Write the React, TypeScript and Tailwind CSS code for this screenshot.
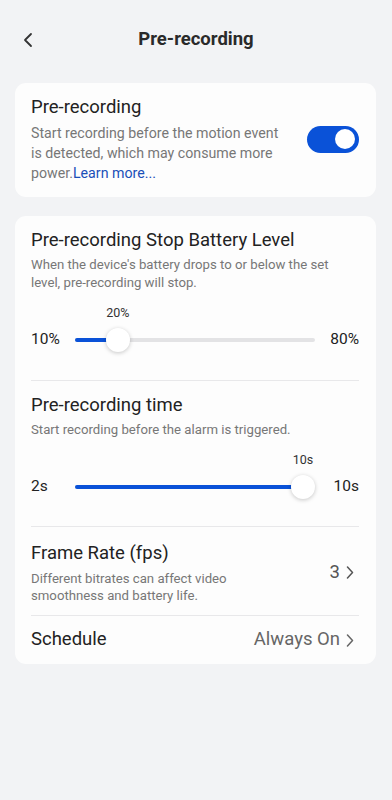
import { ChevronLeft } from 'lucide-react'

// ─── Bits ─────────────────────────────────────────────────────────────────────

function Chevron() {
  return (
    <svg width="8" height="13" viewBox="0 0 8 13" fill="none" className="ml-[6px]">
      <path d="M1.5 1 L6.5 6.5 L1.5 12" stroke="currentColor" strokeWidth="1.5" strokeLinecap="round" strokeLinejoin="round" />
    </svg>
  )
}

interface SliderRowProps {
  min: number
  max: number
  value: number
  unit: string
}

function SliderRow({ min, max, value, unit }: SliderRowProps) {
  const ratio = (value - min) / (max - min)
  // thumb is 24px and stays inside the track
  const thumbLeft = `calc((100% - 24px) * ${ratio})`
  const fillWidth = `calc((100% - 24px) * ${ratio} + 12px)`

  return (
    <div>
      <div className="flex">
        <div className="w-[44px]" />
        <div className="relative h-4 flex-1">
          <span
            className="absolute top-0 w-6 whitespace-nowrap text-center text-[12.5px] leading-4 text-[#333]"
            style={{ left: thumbLeft }}
          >
            {value}
            {unit}
          </span>
        </div>
        <div className="w-[44px]" />
      </div>
      <div className="mt-[7px] flex h-6 items-center">
        <span className="w-[44px] text-[15.5px] text-[#222]">
          {min}
          {unit}
        </span>
        <div className="relative h-6 flex-1">
          <div className="absolute inset-x-0 top-[10px] h-1 rounded-full bg-[#e3e3e5]" />
          <div
            className="absolute left-0 top-[10px] h-1 rounded-full bg-[#0a52d8]"
            style={{ width: fillWidth }}
          />
          <div
            className="absolute top-0 h-6 w-6 rounded-full bg-white shadow-[0_1px_4px_rgba(0,0,0,0.22)]"
            style={{ left: thumbLeft }}
          />
        </div>
        <span className="w-[44px] text-right text-[15.5px] text-[#222]">
          {max}
          {unit}
        </span>
      </div>
    </div>
  )
}

// ─── Page ─────────────────────────────────────────────────────────────────────

export default function App() {
  return (
    <div className="min-h-[800px] bg-[#f2f3f5] font-['Roboto',sans-serif] text-[#222]">
      {/* Header */}
      <header className="relative flex h-[80px] items-center justify-center">
        <ChevronLeft className="absolute left-[16px] top-[28px] h-6 w-6 text-[#333]" strokeWidth={1.8} />
        <h1 className="text-[18.5px] font-bold text-[#2a2a2a]">Pre-recording</h1>
      </header>

      <div className="mt-[3px] pl-[15px] pr-[16px]">
        {/* Pre-recording toggle */}
        <section className="flex items-center gap-6 rounded-[11px] bg-[#fdfdfd] pb-[14px] pl-4 pr-[17px] pt-[12px]">
          <div className="flex-1">
            <h2 className="text-[18.5px] leading-6">Pre-recording</h2>
            <p className="mt-[4px] text-[14.2px] leading-5 text-[#777]">
              Start recording before the motion event is detected, which may consume more power.
              <span className="text-[#1a4fb8]">Learn more...</span>
            </p>
          </div>
          <div className="flex h-[27px] w-[52px] shrink-0 items-center justify-end rounded-full bg-[#0a52d8] pr-[4px]">
            <div className="h-[20px] w-[20px] rounded-full bg-white" />
          </div>
        </section>

        {/* Settings card */}
        <section className="mt-[19px] rounded-[11px] bg-[#fdfdfd] pl-4 pr-[17px]">
          <div className="border-b border-[#e8e8ea] pb-[28px] pt-3">
            <h2 className="text-[18.5px] leading-6">Pre-recording Stop Battery Level</h2>
            <p className="mt-1 text-[13.2px] leading-[18px] text-[#777]">
              When the device's battery drops to or below the set level, pre-recording will stop.
            </p>
            <div className="mt-[13px]">
              <SliderRow min={10} max={80} value={20} unit="%" />
            </div>
          </div>

          <div className="border-b border-[#e8e8ea] pb-[27px] pt-3">
            <h2 className="text-[18.5px] leading-6">Pre-recording time</h2>
            <p className="mt-1 text-[13.2px] leading-[18px] text-[#777]">
              Start recording before the alarm is triggered.
            </p>
            <div className="mt-[13px]">
              <SliderRow min={2} max={10} value={10} unit="s" />
            </div>
          </div>

          <div className="flex items-center border-b border-[#e8e8ea] pb-[11px] pt-[14px]">
            <div className="flex-1">
              <h2 className="text-[18.5px] leading-6">Frame Rate (fps)</h2>
              <p className="mt-[5px] w-[220px] text-[13.2px] leading-[17px] text-[#777]">
                Different bitrates can affect video smoothness and battery life.
              </p>
            </div>
            <div className="flex items-center pr-[5px] text-[18.5px] text-[#555]">
              <span>3</span>
              <Chevron />
            </div>
          </div>

          <div className="flex h-[48px] items-center">
            <span className="flex-1 text-[18.5px]">Schedule</span>
            <div className="flex items-center pr-[5px] text-[18.5px] text-[#666]">
              <span>Always On</span>
              <Chevron />
            </div>
          </div>
        </section>
      </div>
    </div>
  )
}
